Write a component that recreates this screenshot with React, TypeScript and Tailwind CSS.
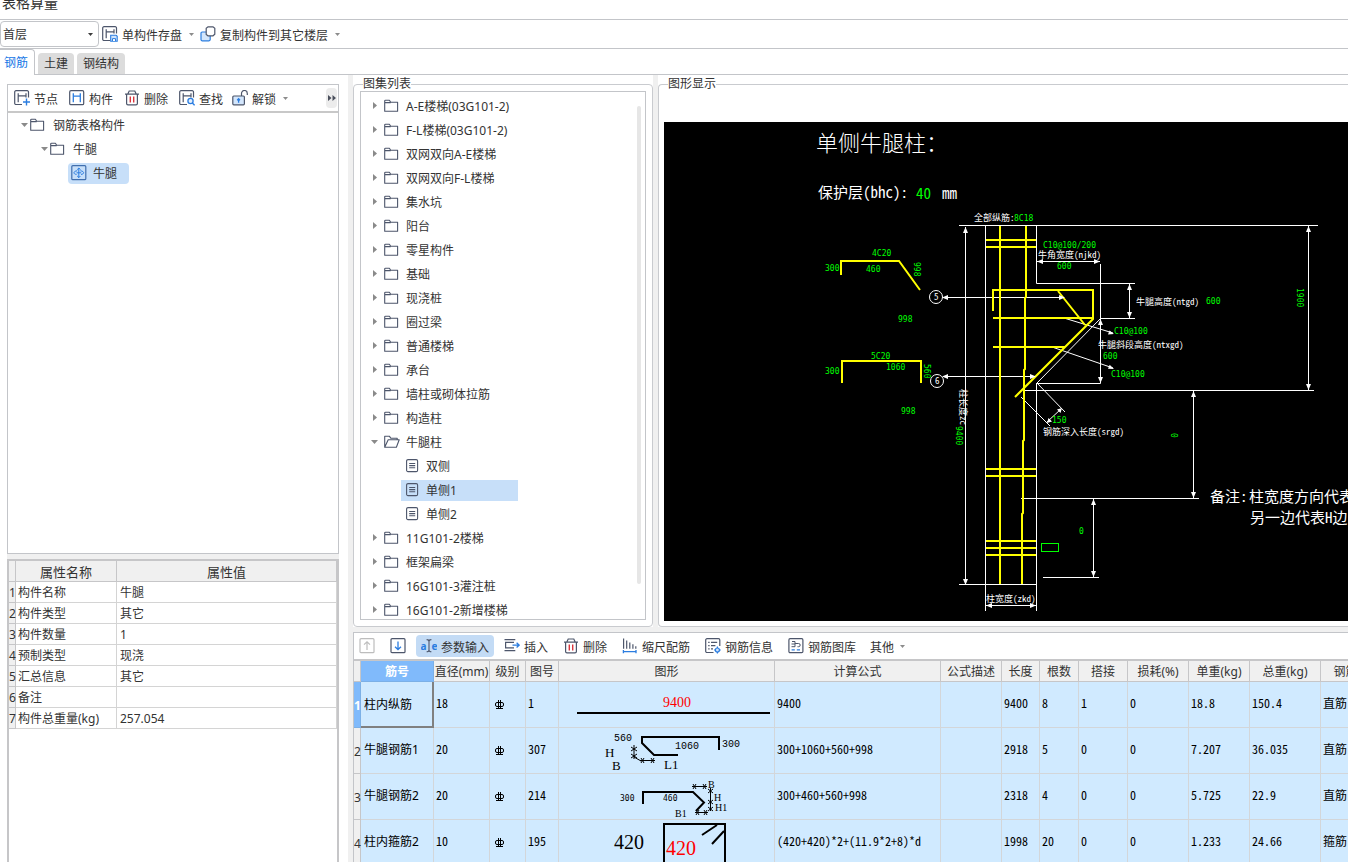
import React, { useState } from "react";

const DARK = "#4d566b";
const BLUE = "#2b7de0";

/* ---------- icons ---------- */

function Icon({ children }: { children: React.ReactNode }) {
  return (
    <svg viewBox="0 0 16 16" className="size-4 shrink-0" fill="none" stroke={DARK} strokeWidth="1.2" aria-hidden="true">
      {children}
    </svg>
  );
}

function PartialH() {
  return (
    <>
      <path d="M8 14.5H2A1.3 1.3 0 0 1 .7 13.2V2A1.3 1.3 0 0 1 2 .7h11.2A1.3 1.3 0 0 1 14.5 2v5.5" />
      <path d="M4.2 3.2v9M12 3.2v4.3M4.2 5.8H12" />
    </>
  );
}

const NodeIcon = () => (
  <Icon>
    <PartialH />
    <path d="M12.5 8.5v7M9 12h7" stroke={BLUE} strokeWidth="1.4" />
  </Icon>
);

const ComponentIcon = () => (
  <Icon>
    <rect x=".7" y=".7" width="14" height="14" rx="1.3" />
    <path d="M4.3 3.2v9M11.3 3.2v9M4.3 6.2h7" stroke={BLUE} strokeWidth="1.3" />
  </Icon>
);

const TrashIcon = () => (
  <Icon>
    <path d="M1 4.2h14M3.8 4l1.4-3h5.6l1.4 3M2.6 4.2v9.2a1.4 1.4 0 0 0 1.4 1.4h8a1.4 1.4 0 0 0 1.4-1.4V4.2" />
    <path d="M6.3 6.5v6M9.7 6.5v6" stroke="#d9363e" strokeWidth="1.4" />
  </Icon>
);

const SearchIcon = () => (
  <Icon>
    <PartialH />
    <circle cx="11.5" cy="11" r="2.6" stroke={BLUE} strokeWidth="1.3" fill="#e3effd" />
    <path d="M13.4 13l2.2 2.4" stroke={BLUE} strokeWidth="1.4" />
  </Icon>
);

const UnlockIcon = () => (
  <Icon>
    <path d="M9.5 6V3.4a2.9 2.9 0 0 1 5.8 0V5" />
    <rect x=".8" y="6" width="11.6" height="8.8" rx="1" fill="#d3e6fc" />
    <path d="M6.6 12.800V9.200M5.200 10.200l1.400-1.500 1.400 1.500" stroke={BLUE} strokeWidth="1.3" />
  </Icon>
);

const SaveIcon = () => (
  <Icon>
    <PartialH />
    <path d="M8.7 9.3h5.5l1 1v4.9H8.7z" stroke={BLUE} strokeWidth="1.1" fill="#cfe3fb" />
    <path d="M10.5 15v-2.4h3V15" stroke={BLUE} strokeWidth="1" fill="#fff" />
  </Icon>
);

const CopyIcon = () => (
  <Icon>
    <rect x="1" y="6" width="9.2" height="8.8" rx="1.2" stroke={BLUE} fill="#d3e6fc" />
    <path d="M8 .9h5l1.8 1.4v6L13 9.8H8L6.2 8.4V2.3z" fill="#fff" />
  </Icon>
);

const UpIcon = () => (
  <Icon>
    <rect x="1" y=".7" width="14" height="14" rx="1" stroke="#bdbdbd" />
    <path d="M8 12V4M5 6.6L8 3.8l3 2.8" stroke="#bdbdbd" />
  </Icon>
);

const DownIcon = () => (
  <Icon>
    <rect x="1" y=".7" width="14" height="14" rx="1" />
    <path d="M8 3.4v8M5 8.8l3 2.8 3-2.8" stroke={BLUE} strokeWidth="1.3" />
  </Icon>
);

const ParamIcon = () => (
  <Icon>
    <text x="-.6" y="11.5" fontSize="10" fontWeight="700" fontFamily="Noto Sans, sans-serif" fill={BLUE} stroke="none">
      a
    </text>
    <text x="10.4" y="11.5" fontSize="10" fontWeight="700" fontFamily="Noto Sans, sans-serif" fill={BLUE} stroke="none">
      e
    </text>
    <path d="M5.6 1.6Q8 1.6 8 3.4 8 1.6 10.4 1.6M8 3v9.4M5.6 13.8Q8 13.8 8 12 8 13.8 10.4 13.8" strokeWidth="1.1" />
  </Icon>
);

const InsertIcon = () => (
  <Icon>
    <path d="M.5 1.6h10.8M.5 12.6h10.8M10 4.4H1.6v5.4H10" />
    <path d="M8.5 7.1h6.6M12.6 4.8l2.5 2.3-2.5 2.3" stroke={BLUE} strokeWidth="1.3" />
  </Icon>
);

const ScaleIcon = () => (
  <Icon>
    <path d="M1.6.5v10.3M4.7 2.4v8.4M7.8 4.4v6.4M10.9 6.2v4.6M13.8 8.2v2.6" />
    <path d="M1.2 13.6h13M1.4 12v3.2M14 12v3.2" stroke={BLUE} strokeWidth="1.3" />
  </Icon>
);

const InfoIcon = () => (
  <Icon>
    <path d="M8.5 14.5H2A1.3 1.3 0 0 1 .7 13.2V2A1.3 1.3 0 0 1 2 .7h11.5A1.3 1.3 0 0 1 14.8 2v6" />
    <path d="M3.2 4.4h1.4M6 4.4h6.2M3.2 7.6h1.4M6 7.6h4.4M3.2 10.8h1.4M6 10.8h2" />
    <path d="M12.4 8.6v6.8M9 12h6.8" stroke={BLUE} strokeWidth="1.2" />
    <circle cx="12.4" cy="12" r="2" stroke={BLUE} fill="#d3e6fc" />
  </Icon>
);

const LibraryIcon = () => (
  <Icon>
    <rect x=".9" y=".7" width="14" height="14" rx="1.2" />
    <path d="M4 3.5h3v5.2M3.500 6h3.500M3.500 8.700H7M7 5.500h3.600a1.600 1.600 0 0 1 0 3.200H9.500" strokeWidth="1" />
    <path d="M3.6 11.9h3.2M8.8 11.9H12" stroke={BLUE} strokeWidth="1.3" />
  </Icon>
);

const MemberIcon = () => (
  <svg viewBox="0 0 16 16" className="size-4 shrink-0" fill="none" stroke="#416fae" strokeWidth="1.2" aria-hidden="true">
    <rect x=".8" y=".7" width="14" height="14" rx="1" />
    <path
      d="M7.800 3v9.600M6.200 4.600L7.800 3l1.600 1.600M6.200 5.800C3.800 6 3 7 3 7.800s1 1.600 2.600 1.600M9.400 5.800c2.400.2 3.200 1.200 3.200 2s-1 1.600-2.600 1.600M5.600 7.800h4.600M6.200 11l1.600 1.600 1.600-1.600"
      stroke={BLUE}
      strokeWidth="1"
    />
  </svg>
);

function FolderIcon({ open = false }: { open?: boolean }) {
  return (
    <svg viewBox="0 0 16 14" className="h-[14px] w-4 shrink-0" fill="none" stroke={DARK} strokeWidth="1.1" strokeLinejoin="round" aria-hidden="true">
      {open ? (
        <path d="M.7 12.3V1.2h4.6l1.5 2h6.4v1.6M.7 12.3L4.2 4.8h11L12.4 12.3z" />
      ) : (
        <path d="M.7 2A.8.8 0 0 1 1.5 1.2h3.9l1.3 2H13.6v9.1H.7zM.7 3.6h6" />
      )}
    </svg>
  );
}

const DocIcon = () => (
  <svg viewBox="0 0 14 14" className="size-[14px] shrink-0" fill="none" stroke={DARK} strokeWidth="1.1" aria-hidden="true">
    <rect x=".6" y=".6" width="11" height="12" rx="1.4" />
    <path d="M3.2 4.5h6M3.2 6.6h6M3.2 8.7h6" />
  </svg>
);

function TreeArrow({ open = false }: { open?: boolean }) {
  return (
    <svg viewBox="0 0 14 10" className="h-[10px] w-[14px] shrink-0" fill="#8a8a8a" aria-hidden="true">
      <path d={open ? "M1 3h7L4.500 7z" : "M3 1v7l4-3.500z"} />
    </svg>
  );
}

const Caret = ({ dark = false }: { dark?: boolean }) => (
  <svg viewBox="0 0 5 3" className="h-[3px] w-[5px] shrink-0" fill={dark ? "#3c3c3c" : "#8c8c8c"} aria-hidden="true">
    <path d="M0 0h5L2.500 3z" />
  </svg>
);

/* ---------- left side ---------- */

function Label({ children }: { children: React.ReactNode }) {
  return <span className="pt-[3px]">{children}</span>;
}

function RowLabel({ children }: { children: React.ReactNode }) {
  return <span className="pt-0.5">{children}</span>;
}

function ToolButton({ icon, label }: { icon: React.ReactNode; label: string }) {
  return (
    <button className="flex shrink-0 items-center gap-1">
      {icon}
      <Label>{label}</Label>
    </button>
  );
}

const properties: [string, string][] = [
  ["构件名称", "牛腿"],
  ["构件类型", "其它"],
  ["构件数量", "1"],
  ["预制类型", "现浇"],
  ["汇总信息", "其它"],
  ["备注", ""],
  ["构件总重量(kg)", "257.054"],
];

function LeftSide() {
  return (
    <aside className="flex w-[348px] shrink-0 flex-col bg-white pt-[9px] pr-[9px] pl-[7px]">
      <section className="flex h-[470px] shrink-0 flex-col border border-[#c3c5c9]">
        <div className="flex h-7 shrink-0 items-center justify-between border-b-2 border-[#c8c8c8] pl-[6px]">
          <div className="flex items-center gap-[11px]">
            <ToolButton icon={<NodeIcon />} label="节点" />
            <ToolButton icon={<ComponentIcon />} label="构件" />
            <ToolButton icon={<TrashIcon />} label="删除" />
            <ToolButton icon={<SearchIcon />} label="查找" />
            <button className="-ml-0.5 flex items-center gap-1">
              <UnlockIcon />
              <Label>解锁</Label>
              <span className="pl-[3px]">
                <Caret />
              </span>
            </button>
          </div>
          <button aria-label="更多" className="mr-px flex h-5 w-[11px] items-center justify-center rounded-sm bg-[#ececec]">
            <svg viewBox="0 0 8 6" className="h-[6px] w-2" fill="#4a4f5c" aria-hidden="true">
              <path d="M0 0l3.500 3L0 6zM4.500 0L8 3 4.500 6z" />
            </svg>
          </button>
        </div>
        <ul className="flex flex-col">
          <li className="flex h-6 items-center pl-3">
            <button className="flex items-center">
              <TreeArrow open />
              <span className="-ml-1 w-[23px]"><FolderIcon /></span>
              <RowLabel>钢筋表格构件</RowLabel>
            </button>
          </li>
          <li className="flex h-6 items-center pl-8">
            <button className="flex items-center">
              <TreeArrow open />
              <span className="-ml-1 w-[23px]"><FolderIcon /></span>
              <RowLabel>牛腿</RowLabel>
            </button>
          </li>
          <li className="flex h-6 items-center pl-[60px]">
            <button className="flex h-[21px] w-[61px] items-center gap-[6px] rounded-sm bg-[#c7dff9] pl-[3px]">
              <MemberIcon />
              <RowLabel>牛腿</RowLabel>
            </button>
          </li>
        </ul>
      </section>
      <div className="h-[5px] shrink-0 bg-[#f0f0f0]" />
      <section className="min-h-0 flex-1 border-2 border-b-0 border-[#c6c6c8]">
        <table className="w-full table-fixed border-separate border-spacing-0">
          <colgroup>
            <col className="w-[7px]" />
            <col className="w-[101px]" />
            <col />
          </colgroup>
          <thead>
            <tr className="h-[21px] bg-[#f0f0f0] text-[13px] leading-4">
              <th className="border-r border-b border-[#c6c6c8] p-0" />
              <th className="border-r border-b border-[#c6c6c8] p-0 pt-0.5 font-normal">属性名称</th>
              <th className="border-r border-b border-[#c6c6c8] p-0 pt-0.5 font-normal">属性值</th>
            </tr>
          </thead>
          <tbody>
            {properties.map(([name, value], i) => (
              <tr key={name} className="h-[21px] leading-4">
                <th className="border-r border-b border-[#c6c6c8] bg-[#f0f0f0] p-0 pt-0.5 text-left font-normal">{i + 1}</th>
                <td className="border-r border-b border-[#d4d4d4] pt-0.5 pr-0 pb-0 pl-0.5 whitespace-nowrap">{name}</td>
                <td className="border-r border-b border-[#d4d4d4] pt-0.5 pr-0 pb-0 pl-[3px]">{value}</td>
              </tr>
            ))}
          </tbody>
        </table>
      </section>
    </aside>
  );
}

/* ---------- atlas list ---------- */

type AtlasEntry = { label: string; open?: boolean; children?: string[] };

const atlas: AtlasEntry[] = [
  { label: "A-E楼梯(03G101-2)" },
  { label: "F-L楼梯(03G101-2)" },
  { label: "双网双向A-E楼梯" },
  { label: "双网双向F-L楼梯" },
  { label: "集水坑" },
  { label: "阳台" },
  { label: "零星构件" },
  { label: "基础" },
  { label: "现浇桩" },
  { label: "圈过梁" },
  { label: "普通楼梯" },
  { label: "承台" },
  { label: "墙柱或砌体拉筋" },
  { label: "构造柱" },
  { label: "牛腿柱", open: true, children: ["双侧", "单侧1", "单侧2"] },
  { label: "11G101-2楼梯" },
  { label: "框架扁梁" },
  { label: "16G101-3灌注桩" },
  { label: "16G101-2新增楼梯" },
];

function AtlasList() {
  const [selected, setSelected] = useState("单侧1");
  return (
    <fieldset className="flex h-[550px] w-[300px] shrink-0 flex-col rounded border border-[#c9cbcf] px-[6px] pb-[6px]">
      <legend className="ml-[3px] leading-[14px]">图集列表</legend>
      <div className="flex h-[529px] justify-between overflow-hidden border border-[#c3c5c9] pt-[2px] pr-1">
        <ul className="pl-[9px]">
          {atlas.map((entry) => (
            <li key={entry.label}>
              <button className="flex h-6 items-center">
                <TreeArrow open={entry.open} />
                <span className="w-[22px]"><FolderIcon open={entry.open} /></span>
                <RowLabel>{entry.label}</RowLabel>
              </button>
              {entry.children && (
                <ul className="pl-[31px]">
                  {entry.children.map((child) => (
                    <li key={child} className="flex h-6 items-center">
                      <button
                        onClick={() => setSelected(child)}
                        className={
                          selected === child
                            ? "flex h-[21px] w-[117px] items-center gap-[6px] bg-[#c7dff9] pl-[5px]"
                            : "flex h-[21px] w-[117px] items-center gap-[6px] pl-[5px]"
                        }
                      >
                        <DocIcon />
                        <RowLabel>{child}</RowLabel>
                      </button>
                    </li>
                  ))}
                </ul>
              )}
            </li>
          ))}
        </ul>
        <div className="mt-3 h-[478px] w-1 rounded-full bg-[#e6e6e6]" />
      </div>
    </fieldset>
  );
}

/* ---------- drawing ---------- */

type Dir = "u" | "d" | "l" | "r";

function Head({ x, y, dir }: { x: number; y: number; dir: Dir }) {
  const d = {
    u: `M${x} ${y}l-2.500 6h5z`,
    d: `M${x} ${y}l-2.500 -6h5z`,
    l: `M${x} ${y}l6 -2.500v5z`,
    r: `M${x} ${y}l-6 -2.500v5z`,
  }[dir];
  return <path d={d} fill="#fff" stroke="none" />;
}

const greenLabels: [number, number, string][] = [
  [1014, 221, "8C18"],
  [872, 256, "4C20"],
  [825, 271, "300"],
  [866, 272, "460"],
  [898, 322, "998"],
  [871, 359, "5C20"],
  [886, 370, "1060"],
  [825, 374, "300"],
  [901, 414, "998"],
  [1043, 248, "C10@100/200"],
  [1057, 269, "600"],
  [1206, 304, "600"],
  [1114, 334, "C10@100"],
  [1103, 359, "600"],
  [1111, 377, "C10@100"],
  [1052, 423, "150"],
  [1079, 534, "0"],
];

const greenVertical: [number, number, string][] = [
  [914, 262, "998"],
  [924, 364, "560"],
  [956, 426, "9400"],
  [1297, 288, "1900"],
  [1171, 433, "0"],
];

const whiteLabels: [number, number, string][] = [
  [974, 221, "全部纵筋:"],
  [1038, 258, "牛角宽度(njkd)"],
  [1136, 305, "牛腿高度(ntgd)"],
  [1098, 348, "牛腿斜段高度(ntxgd)"],
  [1043, 435, "钢筋深入长度(srgd)"],
  [986, 602, "柱宽度(zkd)"],
];

function ColumnDrawing() {
  return (
    <svg viewBox="664 122 684 499" className="h-[499px] w-[684px] shrink-0" fill="none" role="img" aria-label="单侧牛腿柱">
      <g stroke="#fff" strokeWidth="1">
        <path d="M959 225.500H1318M985.500 225V611M1036.500 225V283.500H1135M1036.500 383V611" />
        <path d="M1037 261.500H1100M1100.500 264V383.500H1037M1129.500 284V318M1100 318.500H1135" />
        <path d="M1100 319L1037 383L1065 412M1021 397L1050 426M1047 422L1061 409" />
        <path d="M1023 390.500H1314M1308.500 226V390M1193.500 391V498M1021 498.500H1199M1093.500 499V577M1043 577.500H1099" />
        <path d="M959 584.500H1036M965.500 227V584M986 605.500H1036" />
        <path d="M943 297.500H1063M943 376.500H1034M1064 318L1113 333M1052 347L1113 368" />
        <circle cx="936" cy="297" r="6.500" />
        <circle cx="937" cy="381" r="6.500" />
      </g>
      <g stroke="#ff0" strokeWidth="2">
        <path d="M1000 226V584M1026 226V297L1025 298V369L1024 370V440L1023 441V513L1022 514V584" />
        <path d="M986 240H1036M986 247H1036M986 469H1036M986 476H1036M986 541H1036M986 548H1036M986 555H1036" />
        <path d="M993 311V290H1093V319L1015 397M1058 291L1085 325M993 318H1093M993 347H1065" />
        <path d="M841 275V261H899L920 290M842 383V361H921V383" />
      </g>
      <rect x="1041.500" y="543.500" width="17" height="8" stroke="#0f0" />
      <Head x={965.5} y={227} dir="u" />
      <Head x={965.5} y={585} dir="d" />
      <Head x={1308.5} y={226} dir="u" />
      <Head x={1308.5} y={390} dir="d" />
      <Head x={1193.5} y={391} dir="u" />
      <Head x={1193.5} y={498} dir="d" />
      <Head x={1093.5} y={499} dir="u" />
      <Head x={1093.5} y={577} dir="d" />
      <Head x={1129.5} y={284} dir="u" />
      <Head x={1129.5} y={318} dir="d" />
      <Head x={1100.5} y={319} dir="u" />
      <Head x={1100.5} y={383} dir="d" />
      <Head x={1037} y={261.5} dir="l" />
      <Head x={1100} y={261.5} dir="r" />
      <Head x={942} y={297.5} dir="l" />
      <Head x={1065} y={297.5} dir="r" />
      <Head x={942} y={376.5} dir="l" />
      <Head x={1036} y={376.5} dir="r" />
      <Head x={986} y={605.5} dir="l" />
      <Head x={1036} y={605.5} dir="r" />
      <path d="M1114 334l-6 .5 1.500-4zM1114 369l-6-.2 1.700-4zM1062 408l-5 1.500 3.500 3.500zM1047 423l1.500-5 3.500 3.500z" fill="#fff" />

      <g fill="#fff" className="font-['Liberation_Serif','Noto_Sans_CJK_SC',serif] font-light">
        <text x="816" y="151" fontSize="22">单侧牛腿柱：</text>
        <g fontSize="15" className="font-['Noto_Sans_Mono_CJK_SC','Noto_Sans_CJK_SC',monospace]">
          <text x="818" y="198">保护层(bhc):</text>
          <text x="942" y="199">mm</text>
          <text x="916" y="199" fill="#0f0">40</text>
          <text x="1210" y="502">备注:</text>
          <text x="1249" y="502">柱宽度方向代表</text>
          <text x="1250" y="523">另一边代表H边</text>
        </g>
      </g>
      <g fill="#fff" fontSize="9" className="font-['Noto_Sans_Mono_CJK_SC','Noto_Sans_CJK_SC',monospace]">
        {whiteLabels.map(([x, y, t]) => (
          <text key={t} x={x} y={y}>{t}</text>
        ))}
        <text x="934" y="300">5</text>
        <text x="935" y="384">6</text>
        <text transform="translate(960 389) rotate(90)">柱长度zc</text>
      </g>
      <g fill="#0f0" fontSize="8" className="font-['DejaVu_Sans_Mono',monospace]">
        {greenLabels.map(([x, y, t]) => (
          <text key={`${x}-${y}`} x={x} y={y}>{t}</text>
        ))}
        {greenVertical.map(([x, y, t]) => (
          <text key={`${x}-${y}`} transform={`translate(${x} ${y}) rotate(90)`}>{t}</text>
        ))}
      </g>
    </svg>
  );
}

/* ---------- rebar table ---------- */

function ShapeFrame({ children }: { children: React.ReactNode }) {
  return (
    <svg
      viewBox="0 0 215 45"
      className="block h-[45px] w-[215px] font-['Liberation_Serif',serif]"
      fill="none"
      stroke="#000"
      strokeWidth="2"
      aria-hidden="true"
    >
      {children}
    </svg>
  );
}

const StraightShape = () => (
  <ShapeFrame>
    <path d="M18 31H211" />
    <text x="104" y="25" fontSize="14" fill="#f00" stroke="none">9400</text>
  </ShapeFrame>
);

const BentShape = () => (
  <ShapeFrame>
    <path d="M160 22V9H83V15L95 27H119" />
    <path d="M75 17V31M72 19l6 4M78 19l-6 4M72 26l6 4M78 26l-6 4M75 29l7 4M81 32.500H96M82 30l3 5M85 30l-3 5M92 30l3 5M95 30l-3 5" strokeWidth="1" />
    <g fill="#000" stroke="none">
      <g fontSize="10" className="font-['Liberation_Mono',monospace]">
        <text x="55" y="13">560</text>
        <text x="116" y="21">1060</text>
        <text x="163" y="19">300</text>
      </g>
      <g fontSize="13">
        <text x="46" y="29">H</text>
        <text x="53" y="42">B</text>
        <text x="105" y="41">L1</text>
      </g>
    </g>
  </ShapeFrame>
);

const HookShape = () => (
  <ShapeFrame>
    <path d="M84 30V18H134L145 28.500L137 37" />
    <path d="M133 12.500H148M134 10l3 5M137 10l-3 5M144 10l3 5M147 10l-3 5M151.500 14V37M149 15l5 4M154 15l-5 4M149 26l5 4M154 26l-5 4M149 33l5 4M154 33l-5 4M136 38.500H149M137 36l3 5M140 36l-3 5M145 36l3 5M148 36l-3 5" strokeWidth="1" />
    <g fill="#000" stroke="none">
      <g fontSize="8" className="font-['DejaVu_Sans_Mono',monospace]">
        <text x="61" y="27">300</text>
        <text x="104" y="27">460</text>
      </g>
      <g fontSize="10">
        <text x="149" y="14">B</text>
        <text x="155" y="27">H</text>
        <text x="156" y="37">H1</text>
        <text x="116" y="43">B1</text>
      </g>
    </g>
  </ShapeFrame>
);

const StirrupShape = () => (
  <ShapeFrame>
    <path d="M105 45V4H166V45M143 15L158 5M153 24L165 11" />
    <g fontSize="20" stroke="none">
      <text x="55" y="29" fill="#000">420</text>
      <text x="107" y="35" fill="#f00">420</text>
    </g>
  </ShapeFrame>
);

const GradeMark = () => (
  <svg viewBox="0 0 10 10" className="block h-[10px] w-[10px]" fill="none" stroke="#000" strokeWidth="1" role="img" aria-label="三级钢">
    <rect x=".5" y="2.500" width="8" height="4" rx="1.500" />
    <path d="M3.500 0V9M5.500 0V9M1 8.500H8" />
  </svg>
);

type Rebar = {
  name: string; dia: string; fig: string; shape: React.ReactNode; formula: string;
  len: string; count: string; lap: string; loss: string; unit: string; total: string; kind: string;
};

const rebars: Rebar[] = [
  { name: "柱内纵筋", dia: "18", fig: "1", shape: <StraightShape />, formula: "9400", len: "9400", count: "8", lap: "1", loss: "0", unit: "18.8", total: "150.4", kind: "直筋" },
  { name: "牛腿钢筋1", dia: "20", fig: "307", shape: <BentShape />, formula: "300+1060+560+998", len: "2918", count: "5", lap: "0", loss: "0", unit: "7.207", total: "36.035", kind: "直筋" },
  { name: "牛腿钢筋2", dia: "20", fig: "214", shape: <HookShape />, formula: "300+460+560+998", len: "2318", count: "4", lap: "0", loss: "0", unit: "5.725", total: "22.9", kind: "直筋" },
  { name: "柱内箍筋2", dia: "10", fig: "195", shape: <StirrupShape />, formula: "(420+420)*2+(11.9*2+8)*d", len: "1998", count: "20", lap: "0", loss: "0", unit: "1.233", total: "24.66", kind: "箍筋" },
];

const headings = ["直径(mm)", "级别", "图号", "图形", "计算公式", "公式描述", "长度", "根数", "搭接", "损耗(%)", "单重(kg)", "总重(kg)", "钢筋归类"];

function Cell({ children, flush = false }: { children?: React.ReactNode; flush?: boolean }) {
  return (
    <td className={flush ? "border-r border-b border-[#d3d6d9] p-0" : "border-r border-b border-[#d3d6d9] pt-0 pr-0 pb-1 pl-0.5"}>
      {children}
    </td>
  );
}

function BarButton({ icon, label, active = false }: { icon: React.ReactNode; label: string; active?: boolean }) {
  return (
    <button
      className={
        active
          ? "flex h-[22px] shrink-0 items-center gap-1 rounded-sm bg-[#c3dbf5] px-[5px]"
          : "flex h-[22px] shrink-0 items-center gap-1 rounded-sm px-[5px]"
      }
    >
      {icon}
      <Label>{label}</Label>
    </button>
  );
}

function RebarPanel() {
  return (
    <section className="flex min-h-0 flex-1 flex-col overflow-hidden border-t border-l border-[#c3c5c9] bg-white">
      <div className="flex h-7 shrink-0 items-center gap-[5px] border-b-2 border-[#c6c6c8]">
        <button aria-label="上移" className="flex h-[22px] w-[26px] items-center justify-center"><UpIcon /></button>
        <button aria-label="下移" className="flex h-[22px] w-[26px] items-center justify-center"><DownIcon /></button>
        <BarButton icon={<ParamIcon />} label="参数输入" active />
        <BarButton icon={<InsertIcon />} label="插入" />
        <BarButton icon={<TrashIcon />} label="删除" />
        <BarButton icon={<ScaleIcon />} label="缩尺配筋" />
        <BarButton icon={<InfoIcon />} label="钢筋信息" />
        <BarButton icon={<LibraryIcon />} label="钢筋图库" />
        <button className="flex h-[22px] items-center gap-[6px] px-1">
          <Label>其他</Label>
          <Caret />
        </button>
      </div>
      <table className="w-[1041px] table-fixed border-separate border-spacing-0">
        <colgroup>
          <col className="w-[7px]" />
          <col className="w-[73px]" />
          <col className="w-[56px]" />
          <col className="w-[36px]" />
          <col className="w-[33px]" />
          <col className="w-[216px]" />
          <col className="w-[166px]" />
          <col className="w-[61px]" />
          <col className="w-[38px]" />
          <col className="w-[39px]" />
          <col className="w-[49px]" />
          <col className="w-[61px]" />
          <col className="w-[61px]" />
          <col className="w-[71px]" />
          <col className="w-[74px]" />
        </colgroup>
        <thead>
          <tr className="h-[21px] bg-[#f0f0f0] leading-4 whitespace-nowrap">
            <th className="border-r border-b border-[#c6c6c8] p-0" />
            <th className="border-r border-b border-[#7cb0e6] bg-[#80bafb] p-0 pt-0.5 font-bold text-white">筋号</th>
            {headings.map((h) => (
              <th key={h} className="border-r border-b border-[#c6c6c8] p-0 pt-0.5 font-normal">{h}</th>
            ))}
          </tr>
        </thead>
        <tbody className="bg-[#d0eaff] font-['Noto_Sans_Mono_CJK_SC','Noto_Sans_CJK_SC',monospace] text-black">
          {rebars.map((r, i) => (
            <tr key={r.name} className="h-[46px] leading-4 whitespace-nowrap">
              <th
                className={
                  i === 0
                    ? "border-r border-b border-[#7cb0e6] bg-[#80bafb] p-0 pt-0.5 text-left font-['Noto_Sans',sans-serif] font-bold text-white"
                    : "border-r border-b border-[#c6c6c8] bg-[#f0f0f0] p-0 pt-0.5 text-left font-['Noto_Sans',sans-serif] font-normal text-[#333]"
                }
              >
                {i + 1}
              </th>
              <td
                className={
                  i === 0
                    ? "border-r-2 border-b-2 border-[#808080] p-0 pt-0.5 pl-[3px] font-['Noto_Sans','Noto_Sans_CJK_SC',sans-serif]"
                    : "border-r border-b border-[#d3d6d9] pt-0 pr-0 pb-0.5 pl-[3px] font-['Noto_Sans','Noto_Sans_CJK_SC',sans-serif]"
                }
              >
                {r.name}
              </td>
              <Cell>{r.dia}</Cell>
              <td className="border-r border-b border-[#d3d6d9] p-0 pl-[5px]"><GradeMark /></td>
              <Cell>{r.fig}</Cell>
              <Cell flush>{r.shape}</Cell>
              <Cell>{r.formula}</Cell>
              <Cell />
              <Cell>{r.len}</Cell>
              <Cell>{r.count}</Cell>
              <Cell>{r.lap}</Cell>
              <Cell>{r.loss}</Cell>
              <Cell>{r.unit}</Cell>
              <Cell>{r.total}</Cell>
              <Cell>{r.kind}</Cell>
            </tr>
          ))}
        </tbody>
      </table>
    </section>
  );
}

/* ---------- page ---------- */

export default function App() {
  return (
    <div className="flex h-screen flex-col overflow-hidden bg-white font-['Noto_Sans','Noto_Sans_CJK_SC',sans-serif] text-[12px] leading-4 text-[#333]">
      <header className="flex h-5 shrink-0 items-center overflow-hidden border-b border-[#c3c5c9] pb-[14px] pl-0.5">
        <h1 className="text-[14px] leading-5">表格算量</h1>
      </header>

      <div className="flex h-[29px] shrink-0 items-center border-b border-[#c3c5c9]">
        <div className="relative">
          <select aria-label="楼层" className="block h-[26px] w-[99px] appearance-none rounded border border-[#c3c5c9] bg-white pt-0.5 pl-0.5">
            <option>首层</option>
          </select>
          <span className="pointer-events-none absolute top-3 right-[6px]">
            <Caret dark />
          </span>
        </div>
        <button className="ml-[3px] flex items-center gap-1">
          <SaveIcon />
          <Label>单构件存盘</Label>
          <span className="pl-[3px]"><Caret /></span>
        </button>
        <button className="ml-[6px] flex items-center gap-1">
          <CopyIcon />
          <Label>复制构件到其它楼层</Label>
          <span className="pl-[3px]"><Caret /></span>
        </button>
      </div>

      <nav className="flex h-[26px] shrink-0 items-end">
        <button className="h-[26px] w-[35px] rounded-tr border-t border-r border-[#c3c5c9] pt-px pr-0.5 text-[#1677e6]">钢筋</button>
        <div className="flex h-[26px] flex-1 items-end gap-[3px] border-b border-[#c3c5c9] pl-[3px]">
          <button className="h-[21px] rounded-t bg-[#dcdcdc] px-[6px] pt-px">土建</button>
          <button className="h-[21px] rounded-t bg-[#dcdcdc] px-[6px] pt-px">钢结构</button>
        </div>
      </nav>

      <main className="flex min-h-0 flex-1 bg-[#f0f0f0]">
        <LeftSide />
        <div className="ml-[5px] flex min-w-0 flex-1 flex-col gap-[5px]">
          <div className="flex h-[552px] shrink-0 gap-[5px]">
            <div className="bg-white pt-0.5">
              <AtlasList />
            </div>
            <div className="min-w-0 flex-1 bg-white pt-0.5">
              <fieldset className="flex h-[550px] min-w-0 flex-col rounded-l border border-r-0 border-[#c9cbcf] pb-[5px] pl-[5px]">
                <legend className="ml-1 leading-[14px]">图形显示</legend>
                <div className="mt-[31px] flex h-[499px] overflow-hidden bg-black">
                  <ColumnDrawing />
                </div>
              </fieldset>
            </div>
          </div>
          <RebarPanel />
        </div>
      </main>
    </div>
  );
}
